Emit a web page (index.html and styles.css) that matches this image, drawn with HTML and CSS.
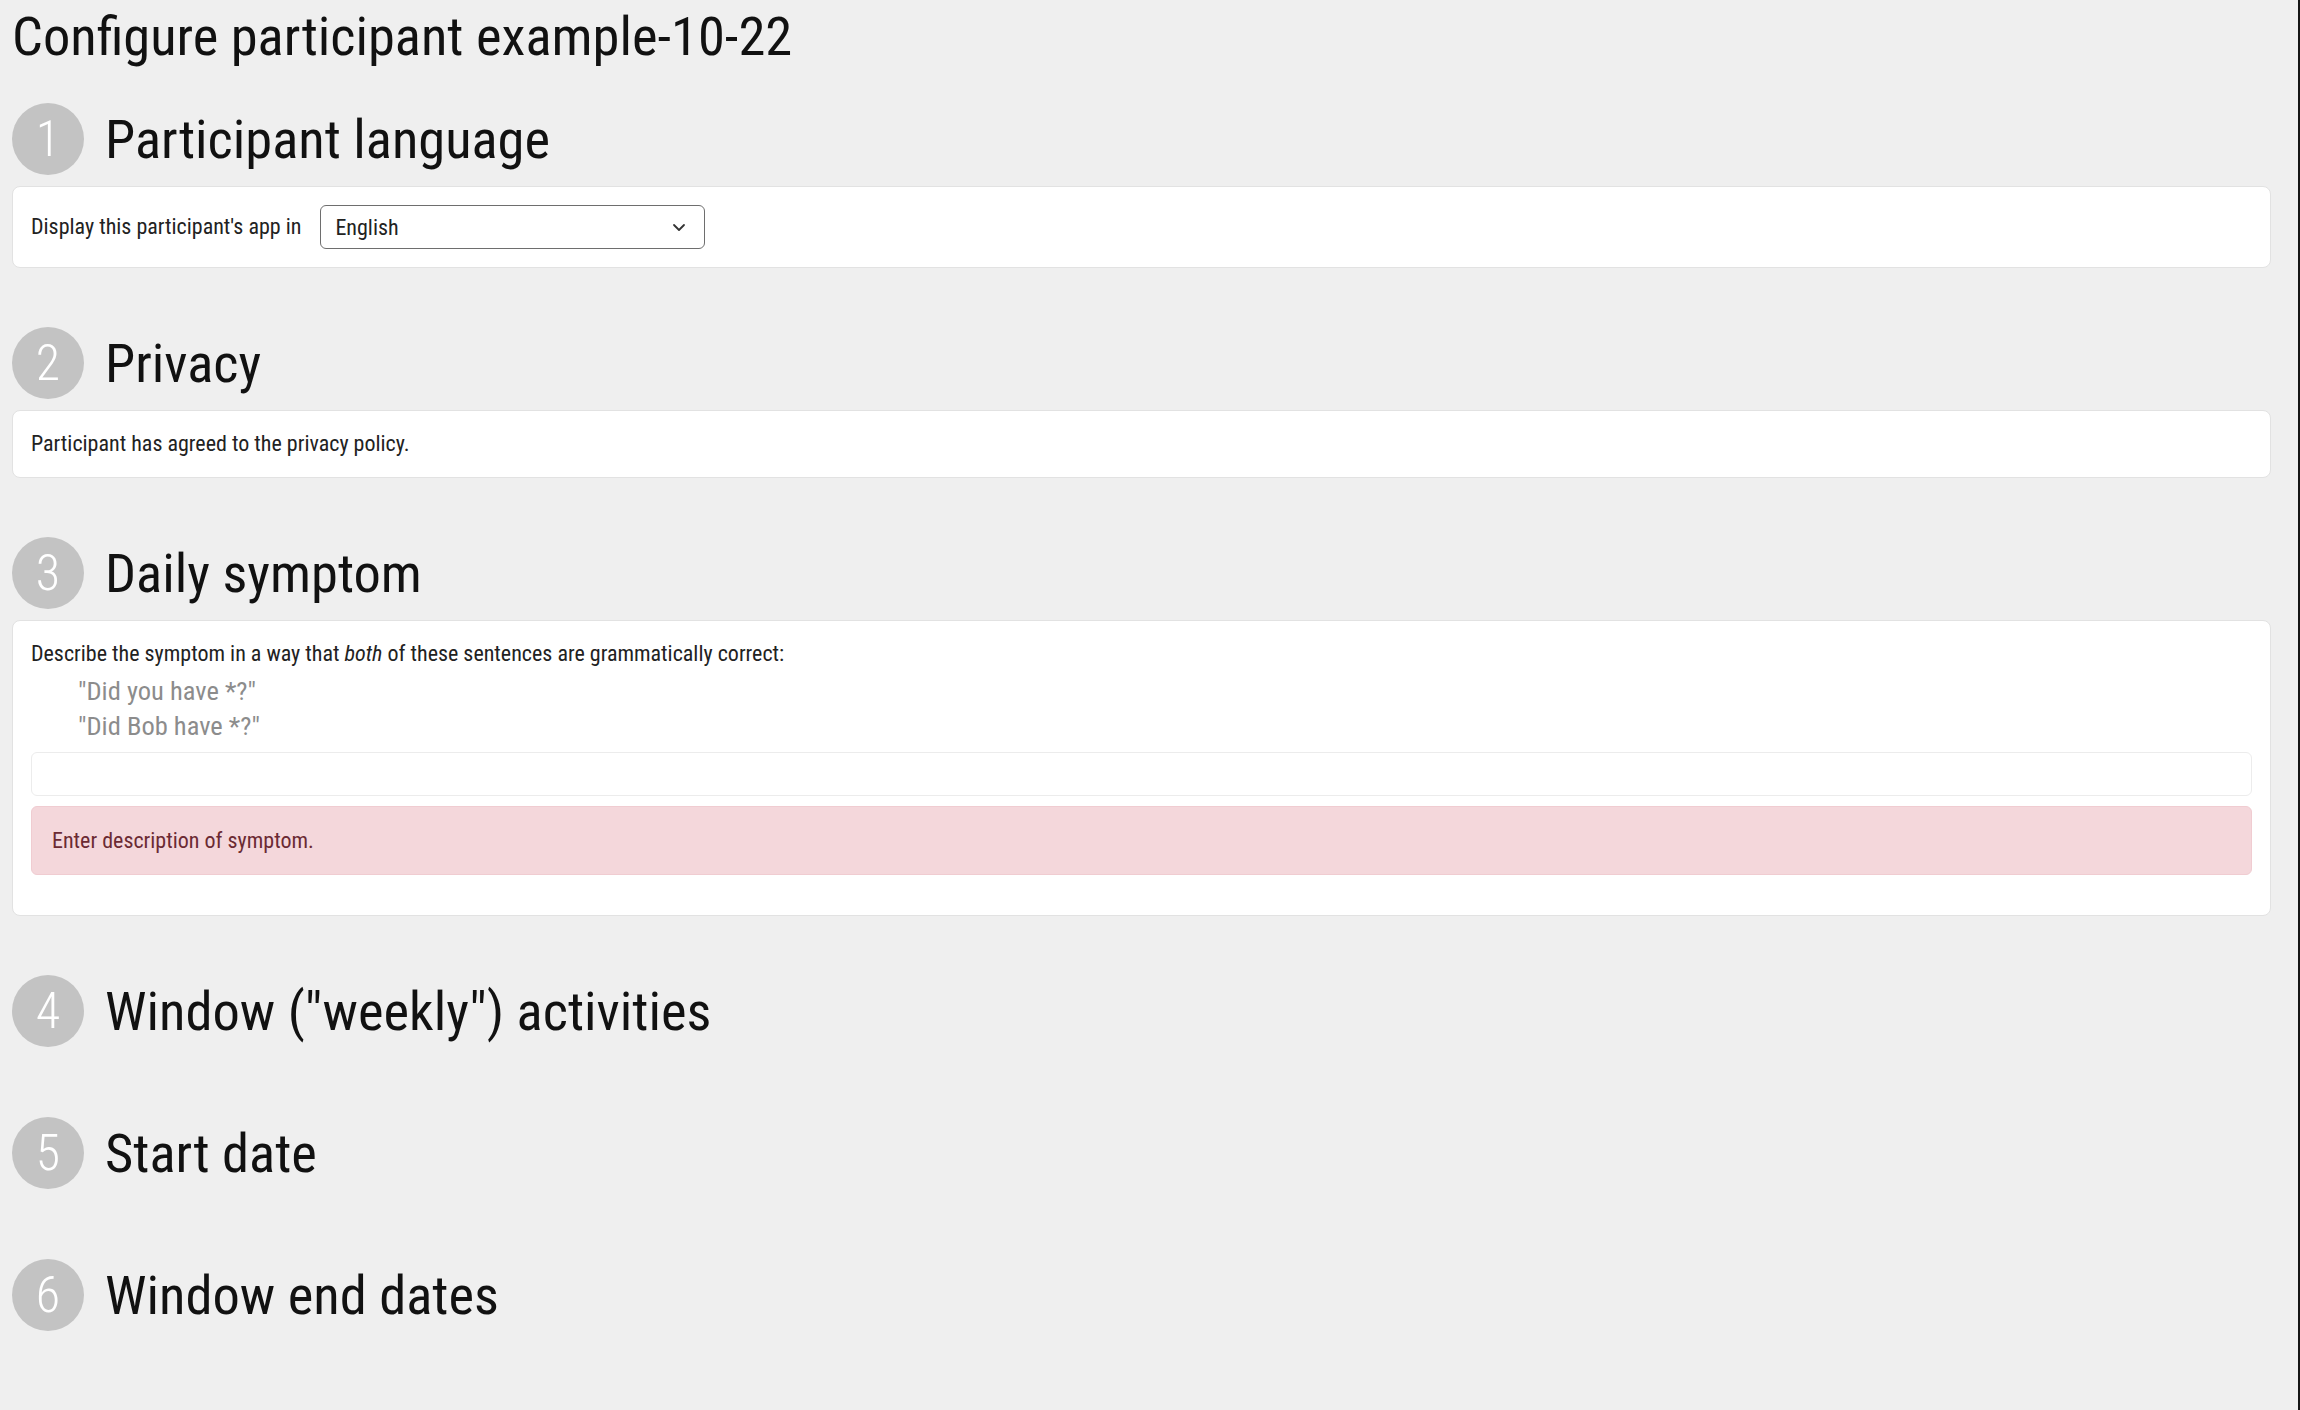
FILE: index.html
```html
<!DOCTYPE html>
<html lang="en">
<head>
<meta charset="utf-8">
<title>Configure participant example-10-22</title>
<link rel="stylesheet" href="styles.css">
</head>
<body>
<main class="page">
  <h1 class="title">Configure participant example-10-22</h1>

  <section class="step">
    <h2 class="step-head"><span class="num">1</span><span class="step-title">Participant language</span></h2>
    <div class="card">
      <div class="lang-row">
        <label class="label" for="lang">Display this participant's app in</label>
        <div class="select">
          <span class="select-value">English</span>
          <svg class="chev" width="14" height="9" viewBox="0 0 14 9"><path d="M2 2l5 5 5-5" fill="none" stroke="#333" stroke-width="1.8" stroke-linecap="round" stroke-linejoin="round"/></svg>
        </div>
      </div>
    </div>
  </section>

  <section class="step">
    <h2 class="step-head"><span class="num">2</span><span class="step-title">Privacy</span></h2>
    <div class="card">
      <p class="text">Participant has agreed to the privacy policy.</p>
    </div>
  </section>

  <section class="step">
    <h2 class="step-head"><span class="num">3</span><span class="step-title">Daily symptom</span></h2>
    <div class="card">
      <p class="text">Describe the symptom in a way that <em>both</em> of these sentences are grammatically correct:</p>
      <div class="quotes">
        <div class="quote">"Did you have *?"</div>
        <div class="quote">"Did Bob have *?"</div>
      </div>
      <div class="input"></div>
      <div class="alert">Enter description of symptom.</div>
    </div>
  </section>

  <section class="step">
    <h2 class="step-head"><span class="num">4</span><span class="step-title">Window ("weekly") activities</span></h2>
  </section>

  <section class="step">
    <h2 class="step-head"><span class="num">5</span><span class="step-title">Start date</span></h2>
  </section>

  <section class="step">
    <h2 class="step-head"><span class="num">6</span><span class="step-title">Window end dates</span></h2>
  </section>
</main>
</body>
</html>
```

FILE: styles.css
```css
html {
  background: #efefef;
}
body {
  margin: 0;
  font-family: Roboto, "Open Sans", sans-serif;
  font-stretch: 75%;
  color: #111;
  background: #efefef;
  border-right: 2px solid #151515;
  min-height: 1410px;
  box-sizing: border-box;
}
.page {
  display: flex;
  flex-direction: column;
  padding: 0 27px 40px 12px;
}
.title {
  margin: 0 0 35px;
  padding-top: 4px;
  font-size: 54.5px;
  font-weight: 400;
  line-height: 64px;
}
.step {
  margin-bottom: 59px;
}
.step-head {
  display: flex;
  align-items: center;
  gap: 21px;
  height: 72px;
  margin: 0 0 11px;
  font-weight: 400;
}
.num {
  width: 72px;
  height: 72px;
  border-radius: 50%;
  background: #c3c3c3;
  color: #fff;
  display: flex;
  align-items: center;
  justify-content: center;
  font-size: 50px;
  font-weight: 300;
  flex: none;
}
.step-title {
  font-size: 54.5px;
  line-height: 72px;
}
.card {
  background: #fff;
  border: 1px solid #e2e2e2;
  border-radius: 8px;
  padding: 18px;
}
.lang-row {
  display: flex;
  align-items: center;
  gap: 19px;
}
.label, .text {
  font-size: 22px;
  line-height: 30px;
  color: #222;
  margin: 0;
}
.select {
  width: 385px;
  height: 44px;
  box-sizing: border-box;
  border: 1.5px solid #6e6e6e;
  border-radius: 6px;
  display: flex;
  align-items: center;
  justify-content: space-between;
  padding: 0 18px 0 14px;
}
.select-value {
  font-size: 22px;
  color: #222;
}
.quotes {
  padding-left: 47px;
  margin-top: 4px;
}
.quote {
  font-size: 26.5px;
  line-height: 35px;
  color: #8c8c8c;
}
.input {
  margin-top: 9px;
  height: 44px;
  box-sizing: border-box;
  border: 1px solid #ececec;
  border-radius: 6px;
}
.alert {
  margin-top: 10px;
  margin-bottom: 22px;
  height: 69px;
  box-sizing: border-box;
  display: flex;
  align-items: center;
  padding: 0 20px;
  background: #f4d7db;
  border: 1px solid #f0ccd1;
  border-radius: 6px;
  color: #6b2a33;
  font-size: 22px;
}
```
